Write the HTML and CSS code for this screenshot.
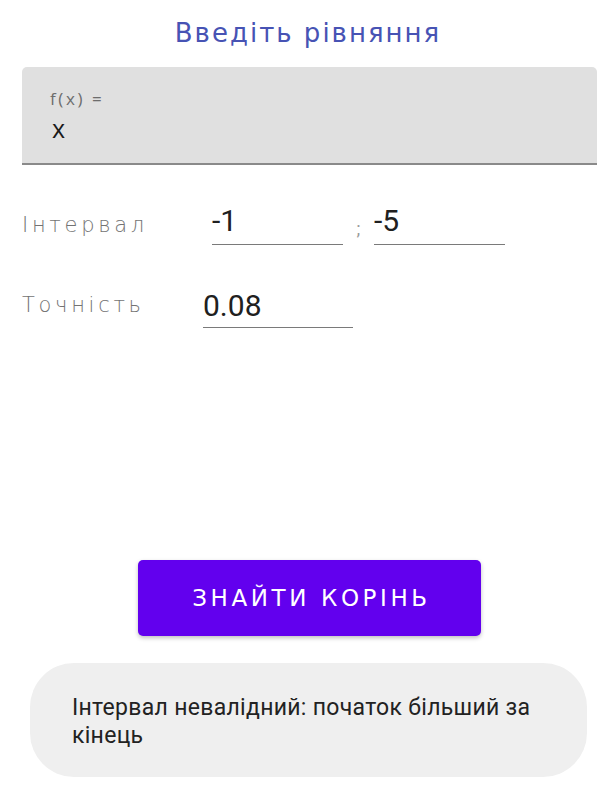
FILE: index.html
```html
<!DOCTYPE html>
<html lang="uk">
<head>
<meta charset="utf-8">
<link rel="stylesheet" href="styles.css">
</head>
<body>
<div class="screen">
  <h1 class="title">Введіть рівняння</h1>
  <div class="fx-field">
    <div class="fx-label">f(x) =</div>
    <div class="fx-value">x</div>
  </div>
  <div class="row row-interval">
    <div class="label">Інтервал</div>
    <div class="input input-a">-1</div>
    <div class="sep">;</div>
    <div class="input input-b">-5</div>
  </div>
  <div class="row row-eps">
    <div class="label">Точність</div>
    <div class="input input-eps">0.08</div>
  </div>
  <div class="spacer"></div>
  <div class="btn-wrap">
    <button class="btn">ЗНАЙТИ КОРІНЬ</button>
  </div>
  <div class="toast">Інтервал невалідний: початок більший за кінець</div>
</div>
</body>
</html>
```
FILE: styles.css
```css
html, body {
  margin: 0;
  padding: 0;
  background: #ffffff;
}
.screen {
  width: 612px;
  height: 789px;
  display: flex;
  flex-direction: column;
  font-family: "DejaVu Sans", sans-serif;
  overflow: hidden;
}
.title {
  margin: 0;
  padding-top: 17px;
  padding-left: 4px;
  height: 67px;
  box-sizing: border-box;
  text-align: center;
  font-weight: 400;
  font-size: 26px;
  line-height: 32px;
  letter-spacing: 2px;
  color: #4753b4;
}
.fx-field {
  margin: 0 15px 0 22px;
  height: 98px;
  box-sizing: border-box;
  background: #e0e0e0;
  border-radius: 5px 5px 0 0;
  border-bottom: 2px solid #8a8a8a;
  padding: 22px 0 0 28px;
  font-family: "Open Sans", "Noto Sans", sans-serif;
}
.fx-label {
  font-size: 17px;
  line-height: 19px;
  letter-spacing: 2.6px;
  color: #6d6d6d;
}
.fx-value {
  margin-top: 7px;
  padding-left: 2px;
  font-size: 25px;
  font-weight: 500;
  line-height: 26px;
  color: #1a1a1a;
}
.row {
  display: flex;
  align-items: flex-end;
}
.row-interval {
  margin-top: 38px;
  padding-left: 22px;
}
.row-eps {
  margin-top: 43px;
  padding-left: 22px;
}
.label {
  font-size: 21px;
  font-weight: 200;
  line-height: 26px;
  color: #737373;
  letter-spacing: 3.7px;
  padding-bottom: 7px;
}
.row-interval .label { width: 190px; }
.row-eps .label { width: 181px; padding-bottom: 10px; }
.input {
  font-family: "Roboto", sans-serif;
  font-size: 30px;
  line-height: 36px;
  color: #202020;
  border-bottom: 1.5px solid #7a7a7a;
  padding-bottom: 5px;
}
.input-a, .input-b { width: 131px; }
.input-eps { width: 150px; padding-bottom: 3px; }
.sep {
  width: 31px;
  text-align: center;
  font-family: "Roboto", sans-serif;
  font-size: 18px;
  color: #9a9a9a;
  padding-bottom: 6px;
}
.spacer {
  flex: 1;
}
.btn-wrap {
  display: flex;
  justify-content: center;
  padding-left: 7px;
}
.btn {
  width: 343px;
  height: 76px;
  border: none;
  border-radius: 5px;
  background: #6200ee;
  color: #ffffff;
  font-family: "DejaVu Sans", sans-serif;
  font-weight: 400;
  font-size: 23px;
  letter-spacing: 3.6px;
  box-shadow: 0 2px 4px rgba(0,0,0,0.25);
  padding: 0 0 0 4px;
}
.toast {
  margin: 27px 25px 12px 30px;
  height: 114px;
  box-sizing: border-box;
  background: #efefef;
  border-radius: 44px;
  padding: 31px 30px 0 42px;
  font-family: "Roboto", sans-serif;
  font-size: 23px;
  letter-spacing: 0.3px;
  line-height: 28px;
  color: #222222;
}
```
